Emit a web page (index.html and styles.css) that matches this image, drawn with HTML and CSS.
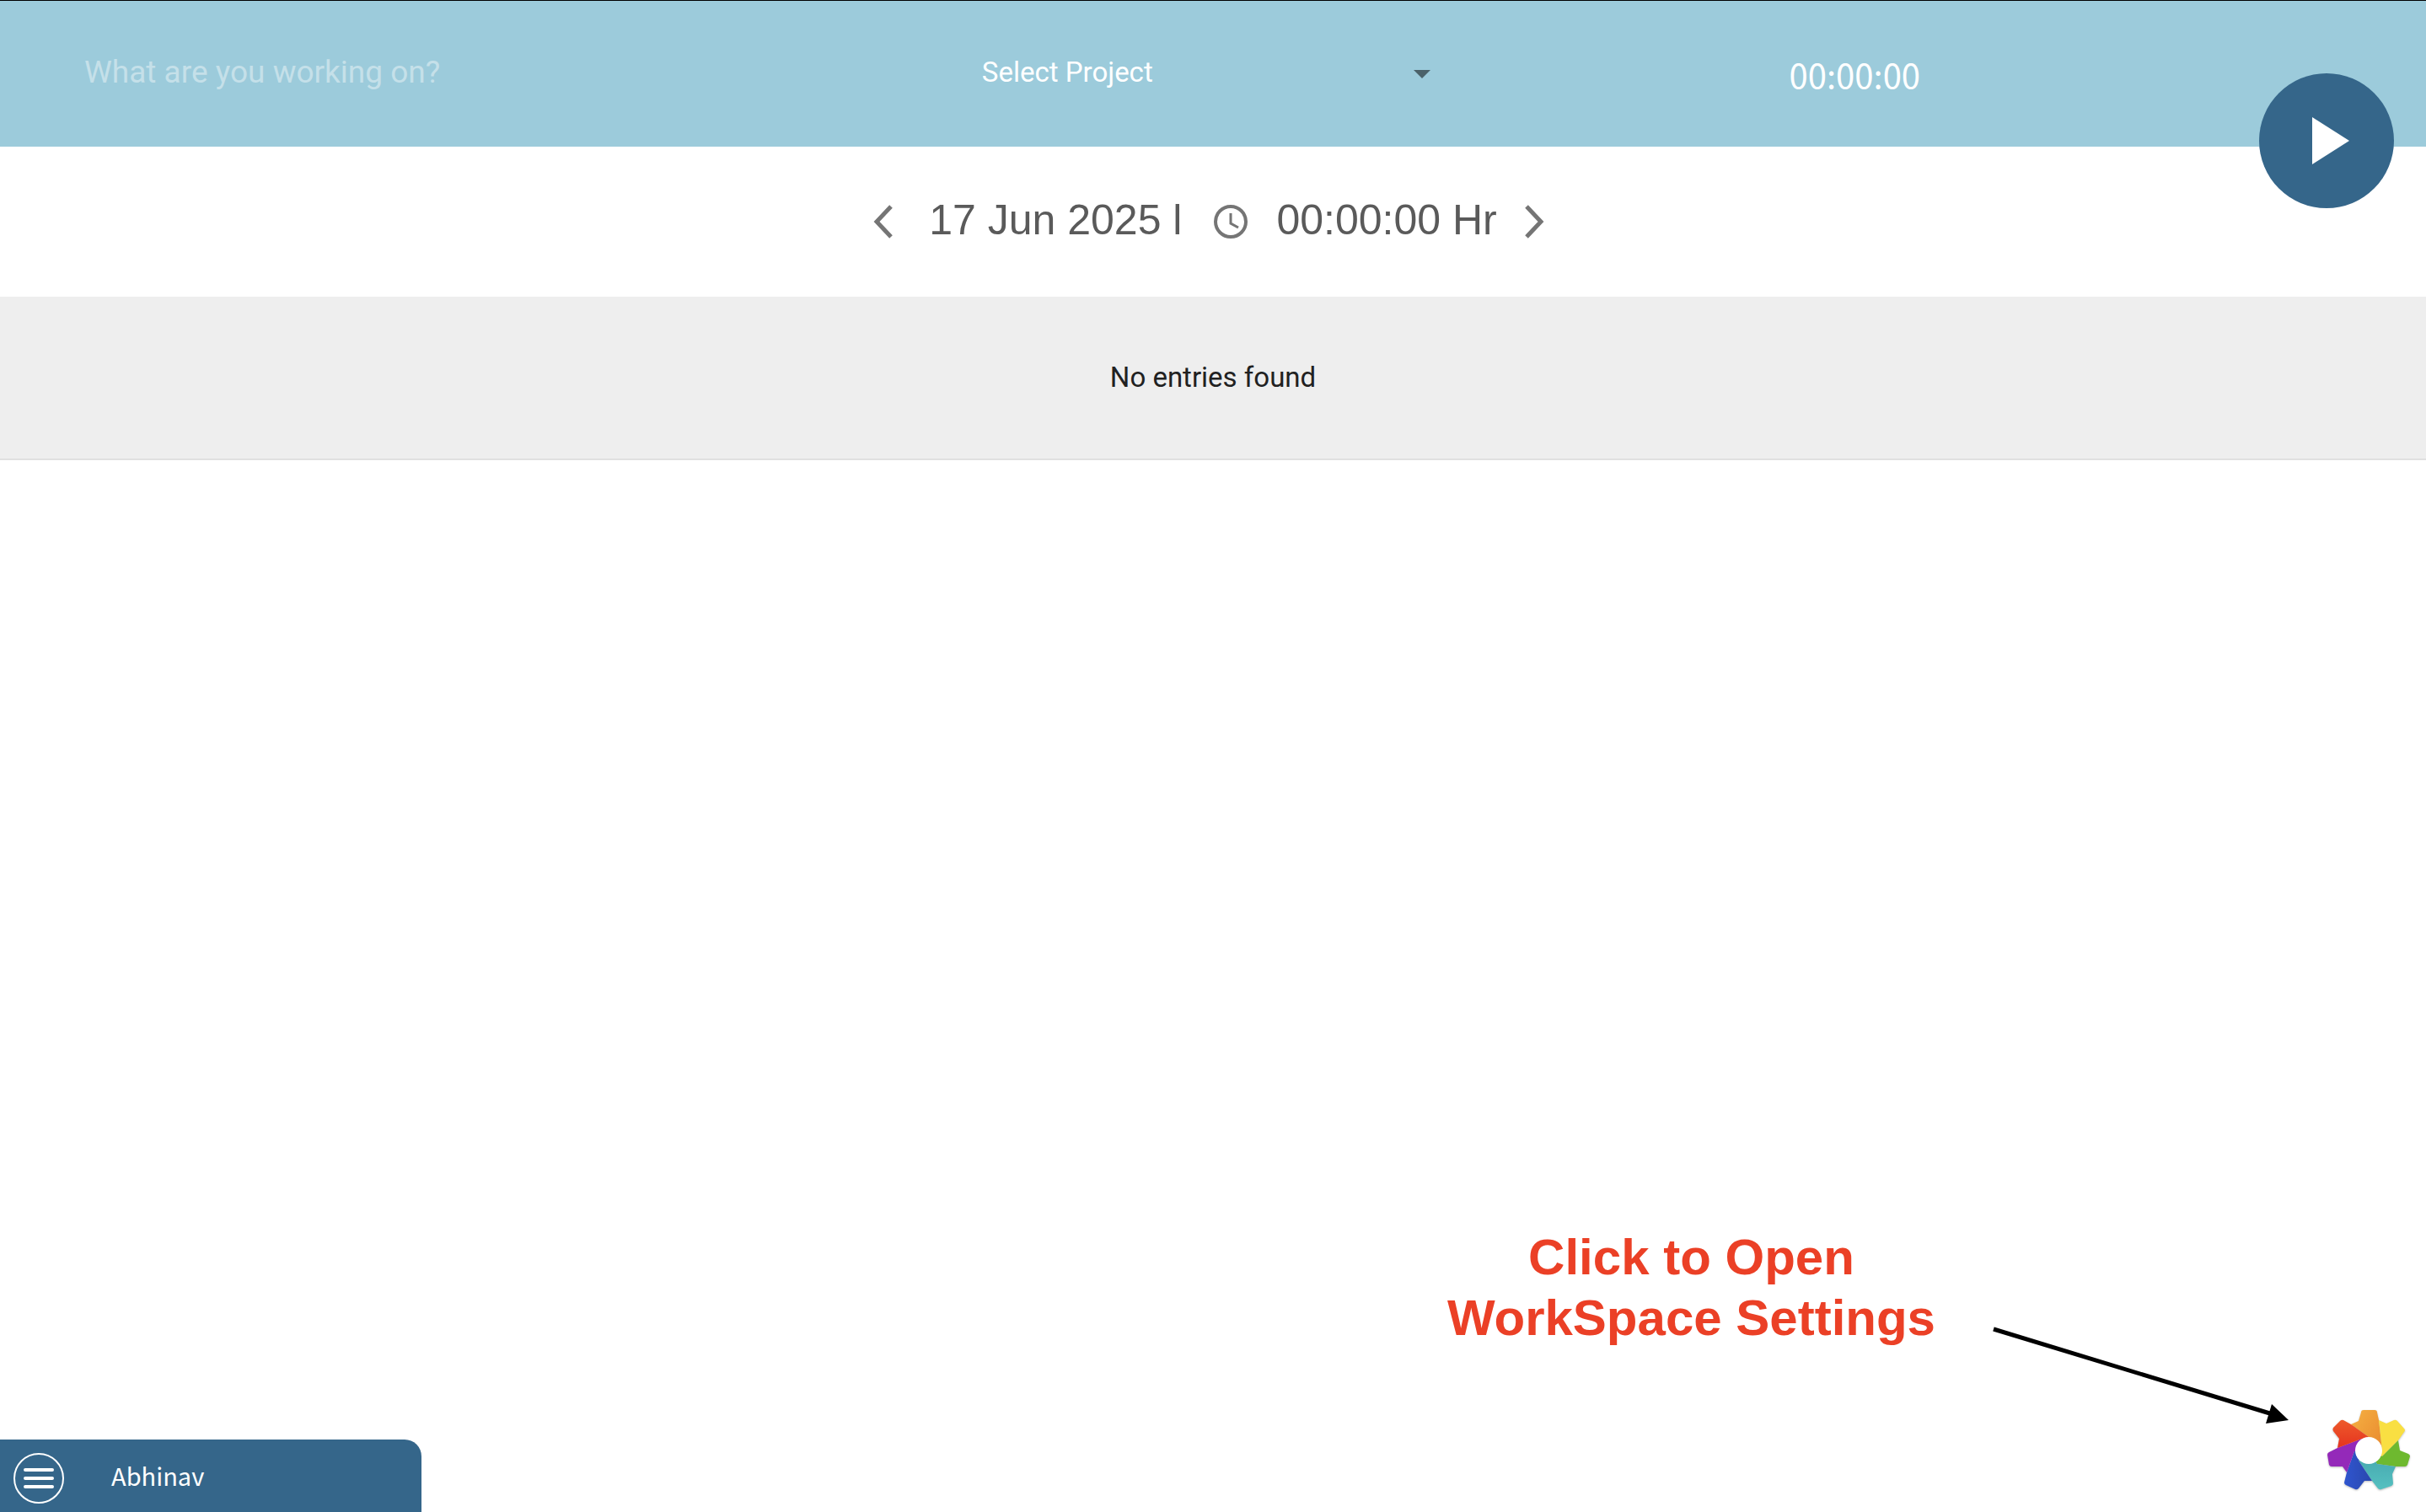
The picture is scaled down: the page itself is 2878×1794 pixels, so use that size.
FILE: index.html
```html
<!DOCTYPE html>
<html lang="en">
<head>
<meta charset="utf-8">
<title>Time Tracker</title>
<link rel="stylesheet" href="styles.css">
</head>
<body>
<div class="app">
  <header class="tracker">
    <div class="tracker-cell task-cell">
      <input class="task-input" type="text" placeholder="What are you working on?" aria-label="What are you working on?">
    </div>
    <div class="tracker-cell project-cell">
      <select class="project-select" aria-label="Project">
        <option>Select Project</option>
      </select>
      <svg class="caret" viewBox="0 0 20 10" aria-hidden="true"><path d="M0 0h20L10 10z"/></svg>
    </div>
    <div class="tracker-cell timer-cell"><span class="timer">00:00:00</span></div>
    <button class="play" type="button" aria-label="Start timer">
      <svg class="play-icon" viewBox="0 0 44 56" aria-hidden="true"><path d="M0 0l44 28L0 56z"/></svg>
    </button>
  </header>

  <main class="content">
    <nav class="day-bar" aria-label="Day">
      <button class="arrow" type="button" aria-label="Previous day">
        <svg viewBox="0 0 24 40" aria-hidden="true"><path d="M21 2L4 20l17 18"/></svg>
      </button>
      <span class="day">17 Jun 2025 l</span>
      <svg class="clock" viewBox="0 0 40 40" aria-hidden="true"><circle cx="20" cy="20" r="18"/><path class="hands" d="M20 10v12l9 5"/></svg>
      <span class="total">00:00:00 Hr</span>
      <button class="arrow" type="button" aria-label="Next day">
        <svg viewBox="0 0 24 40" aria-hidden="true"><path d="M3 2l17 18L3 38"/></svg>
      </button>
    </nav>
    <section class="entries"><p class="empty">No entries found</p></section>
  </main>

  <footer class="bottom">
    <div class="user-tab">
      <button class="menu" type="button" aria-label="Menu">
        <svg viewBox="0 0 60 60" aria-hidden="true"><circle cx="30" cy="30" r="29"/><path d="M14 20h32M14 30h32M14 40h32"/></svg>
      </button>
      <span class="user-name">Abhinav</span>
    </div>
    <div class="hint">
      <p class="hint-text">Click to Open<br>WorkSpace Settings</p>
      <svg class="hint-arrow" viewBox="0 0 352 116" aria-hidden="true"><path class="shaft" d="M1 3L332 104"/><path d="M331 92l20 19-27 4z"/></svg>
      <button class="settings" type="button" aria-label="Workspace settings">
        <svg viewBox="0 0 100 98" aria-hidden="true">
          <defs>
            <linearGradient id="orange" x2="1" y2="1"><stop offset="0" stop-color="#f5b042"/><stop offset="1" stop-color="#e8872d"/></linearGradient>
            <linearGradient id="red" x2="0" y2="1"><stop offset="0" stop-color="#ee5a2b"/><stop offset="1" stop-color="#e4301e"/></linearGradient>
            <linearGradient id="blue"><stop offset="0" stop-color="#2f55cf"/><stop offset="1" stop-color="#2a48ad"/></linearGradient>
            <linearGradient id="teal" x2="0" y2="1"><stop offset="0" stop-color="#44a5ad"/><stop offset="1" stop-color="#55c0c0"/></linearGradient>
          </defs>
          <path fill="url(#orange)" d="M29 18L38 14 41 4Q41 1 44 1H57Q60 1 60 4L62 13 66 48V56L50 49V33Z"/>
          <path fill="#f9df42" d="M62 13L71 17 80 13Q82 12 84 14L92 23Q94 25 92 27L85 37 66 56 50 49H66Z"/>
          <path fill="#6eb92f" d="M85 37L87 49 97 53Q99 54 99 56L96 66Q95 68 93 68H82L60 65 50 49 66 56Z"/>
          <path fill="url(#teal)" d="M82 68L78 77 79 88Q79 90 77 91L65 95Q63 96 61 94L54 85 38 61 50 49 60 65Z"/>
          <path fill="url(#blue)" d="M54 85H45L38 94Q36 96 34 95L23 90Q21 89 21 87L24 75 33 50 50 49 38 61Z"/>
          <path fill="#9429b9" d="M24 75L19 68H6Q4 68 3 66L1 54Q1 52 3 51L13 46 42 35 50 49 33 50Z"/>
          <path fill="url(#red)" d="M13 46L15 35 8 26Q7 24 8 22L16 14Q18 12 20 13L29 18 50 33V49L42 35Z"/>
          <circle fill="#fff" cx="50" cy="49" r="16"/>
        </svg>
      </button>
    </div>
  </footer>
</div>
</body>
</html>
```
FILE: styles.css
```css
* { box-sizing: border-box; }
body { margin: 0; background: #fff; font-family: Roboto, "Liberation Sans", sans-serif; }
button { margin: 0; padding: 0; border: 0; background: none; cursor: pointer; }
svg { display: block; }
.app { display: flex; flex-direction: column; min-height: 100vh; }

.tracker {
  position: relative;
  display: grid;
  grid-template-columns: 37fr 33fr 30fr;
  height: 174px;
  border-top: 1px solid #000;
  background: #9ccbdb;
  color: #fff;
}
.tracker-cell { display: flex; align-items: center; }
.task-cell { padding: 0 100px; }
.task-input {
  width: 100%;
  padding: 0 0 4px;
  border: 0;
  outline: 0;
  background: none;
  color: #fff;
  font: 37px/48px Roboto, sans-serif;
}
.task-input::placeholder { color: #c5e0e9; opacity: 1; }
.project-cell { padding-left: 100px; }
.project-select {
  width: 532px;
  padding: 0 0 4px;
  border: 0;
  appearance: none;
  background: none;
  color: #fff;
  font: 33px/48px Roboto, sans-serif;
}
.caret { width: 20px; margin-left: -20px; fill: #4b626a; pointer-events: none; }
.timer-cell { padding-left: 108px; }
.timer { font: 40px/48px "Noto Sans CJK SC", sans-serif; }
.play {
  position: absolute;
  top: 86px;
  right: 38px;
  display: grid;
  place-items: center;
  width: 160px;
  height: 160px;
  border-radius: 50%;
  background: #35668a;
}
.play-icon { width: 44px; margin-left: 10px; fill: #fff; }

.day-bar {
  display: flex;
  align-items: center;
  justify-content: center;
  height: 178px;
  padding-right: 10px;
  color: #5a5a5a;
  font: 50px/60px "Liberation Sans", sans-serif;
}
.arrow svg { width: 24px; fill: none; stroke: #757575; stroke-width: 5; }
.day, .total { padding-bottom: 4px; }
.day { margin: 0 38px 0 42px; }
.clock { width: 40px; fill: none; stroke: #757575; stroke-width: 4; }
.hands { stroke-width: 3; }
.total { margin: 0 32px 0 34px; }
.entries {
  display: grid;
  place-items: center;
  height: 194px;
  border-bottom: 2px solid #e0e0e0;
  background: #eee;
}
.empty { margin: 0; color: #212121; font-size: 33px; line-height: 48px; }

.bottom { display: flex; align-items: flex-end; justify-content: space-between; margin-top: auto; }
.user-tab {
  display: flex;
  gap: 56px;
  width: 500px;
  height: 86px;
  padding: 16px;
  border-top-right-radius: 20px;
  background: #35668a;
  color: #fff;
}
.menu svg { width: 60px; fill: none; stroke: #fff; stroke-width: 2; }
.menu path { stroke-width: 4; stroke-linecap: round; }
.user-name { font: 29px/52px "Noto Sans CJK SC", "Noto Sans", sans-serif; }
.hint { display: flex; align-items: flex-end; padding: 0 18px 24px 0; }
.hint-text {
  margin: 0 68px 170px 0;
  color: #eb4026;
  font: bold 60px/72px "Liberation Sans", sans-serif;
  text-align: center;
}
.hint-arrow { width: 352px; margin: 0 44px 80px 0; }
.shaft { fill: none; stroke: #000; stroke-width: 5; }
.settings svg { width: 100px; filter: drop-shadow(0 1px 1px #0004); }
```
